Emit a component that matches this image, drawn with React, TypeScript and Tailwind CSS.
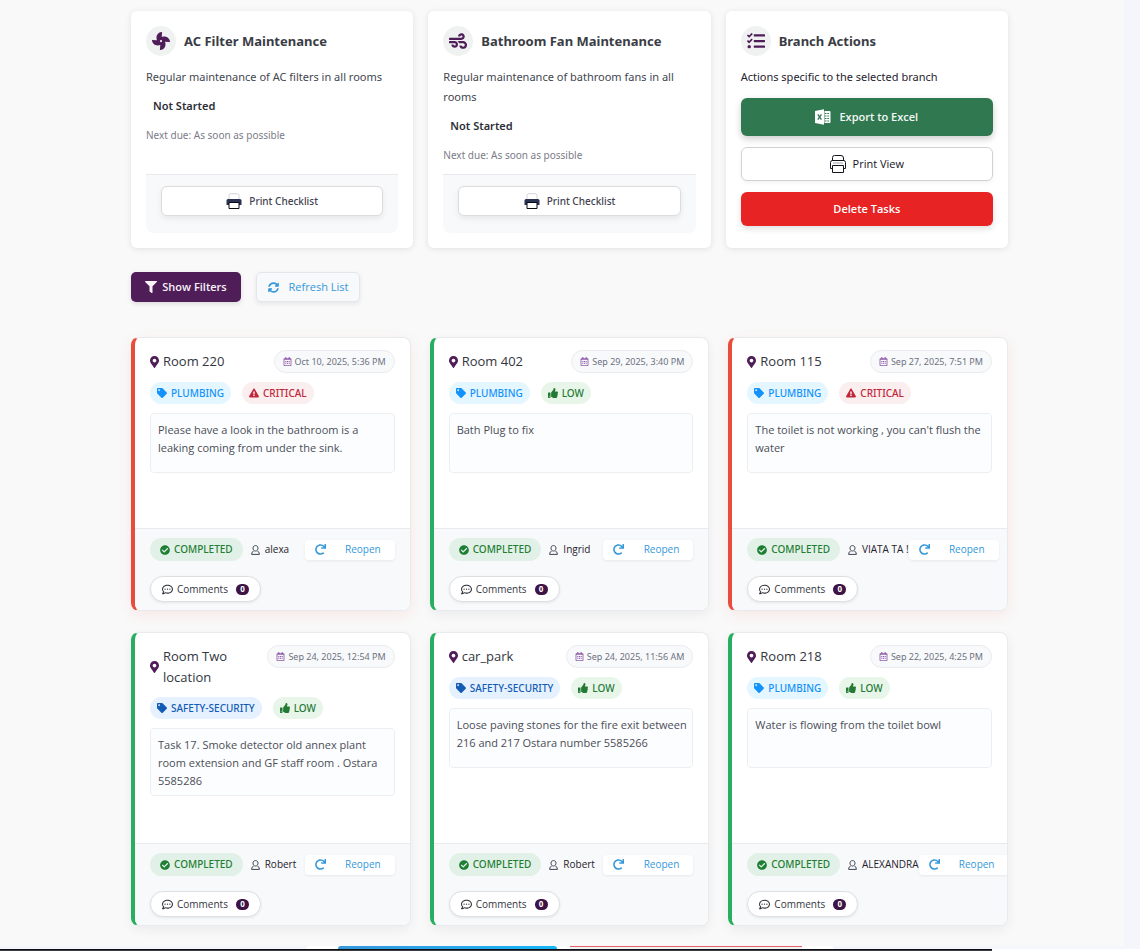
import type { ReactNode } from 'react';
import {
  FaCheckCircle,
  FaExclamationTriangle,
  FaFan,
  FaFilter,
  FaMapMarkerAlt,
  FaRedo,
  FaRegCalendarAlt,
  FaRegCommentDots,
  FaSyncAlt,
  FaTag,
  FaTasks,
  FaThumbsUp,
  FaWind,
} from 'react-icons/fa';

type Category = 'PLUMBING' | 'SAFETY-SECURITY';
type Priority = 'CRITICAL' | 'LOW';

interface Task {
  id: number;
  location: string;
  date: string;
  category: Category;
  priority: Priority;
  description: string;
  user: string;
}

const tasks: Task[] = [
  { id: 1, location: 'Room 220', date: 'Oct 10, 2025, 5:36 PM', category: 'PLUMBING', priority: 'CRITICAL', description: 'Please have a look in the bathroom is a leaking coming from under the sink.', user: 'alexa' },
  { id: 2, location: 'Room 402', date: 'Sep 29, 2025, 3:40 PM', category: 'PLUMBING', priority: 'LOW', description: 'Bath Plug to fix', user: 'Ingrid' },
  { id: 3, location: 'Room 115', date: 'Sep 27, 2025, 7:51 PM', category: 'PLUMBING', priority: 'CRITICAL', description: "The toilet is not working , you can't flush the water", user: 'VIATA TA !' },
  { id: 4, location: 'Room Two location', date: 'Sep 24, 2025, 12:54 PM', category: 'SAFETY-SECURITY', priority: 'LOW', description: 'Task 17. Smoke detector old annex plant room extension and GF staff room . Ostara 5585286', user: 'Robert' },
  { id: 5, location: 'car_park', date: 'Sep 24, 2025, 11:56 AM', category: 'SAFETY-SECURITY', priority: 'LOW', description: 'Loose paving stones for the fire exit between 216 and 217 Ostara number 5585266', user: 'Robert' },
  { id: 6, location: 'Room 218', date: 'Sep 22, 2025, 4:25 PM', category: 'PLUMBING', priority: 'LOW', description: 'Water is flowing from the toilet bowl', user: 'ALEXANDRA' },
];

function PrinterSolid() {
  return (
    <svg width="16" height="16" viewBox="0 0 16 16" aria-hidden="true">
      <path d="M3 6V2.500Q3 .7 4.800.7h6.400Q13 .7 13 2.500V6" fill="#fff" stroke="#d4d4d8" />
      <path d="M2 6h12q1.500 0 1.500 1.500V12H.5V7.500Q.5 6 2 6z" fill="#2b3353" />
      <path d="M3 9.500h10v6H3z" fill="#fff" stroke="#0b0b12" />
    </svg>
  );
}

function PrinterOutline() {
  return (
    <svg width="16" height="18" viewBox="0 0 16 18" fill="none" stroke="#14141f" aria-hidden="true">
      <path d="M2.500 6V2.500Q2.500.5 4.500.5h6.500q2.500 0 2.500 2.500V6" />
      <path d="M2.500 13.500H.5v-6Q.5 5.500 2.500 5.500h11q2 0 2 2v6h-2" />
      <path d="M2.500 10.500h11v7h-11z" />
      <path d="M3 8h10" stroke="#9ca3af" />
    </svg>
  );
}

function ExcelIcon() {
  return (
    <svg width="16" height="16" viewBox="0 0 16 16" aria-hidden="true">
      <path d="M0 2 9 .3v15.400L0 14z" fill="#fff" />
      <path d="M9.500 2h5q1 0 1 1v10q0 1-1 1h-5z" fill="#fff" />
      <path d="M10 4.500h1.500m.8 0H14M10 7h1.500m.8 0H14M10 9.500h1.500m.8 0H14M10 12h1.500m.8 0H14" stroke="#30784f" strokeWidth="1" />
      <path d="m2.800 5.300 3.600 5.400m0-5.400-3.600 5.400" stroke="#30784f" strokeWidth="1.300" />
    </svg>
  );
}

function UserIcon() {
  return (
    <svg width="9" height="10" viewBox="0 0 9 10" fill="none" stroke="#3f4450" strokeWidth="1" aria-hidden="true">
      <path d="M4.500.6C6.200.6 7 1.700 7 3.100 7 4.700 6 6 4.500 6S2 4.700 2 3.100C2 1.700 2.800.6 4.500.6z" />
      <path d="M2.700 6Q.6 6.600.6 9.400h7.800Q8.400 6.600 6.300 6" />
    </svg>
  );
}

function PanelCard({ icon, title, children }: { icon: ReactNode; title: string; children: ReactNode }) {
  return (
    <section className="flex flex-col rounded-md bg-white p-[15px] font-['Noto_Sans','Open_Sans',sans-serif] shadow-[0_1px_6px_rgba(0,0,0,0.1)]">
      <div className="mb-[11px] flex items-center gap-2">
        <span className="flex size-[30px] shrink-0 items-center justify-center rounded-full bg-[#f0f2f2] text-[#4f1d57]">{icon}</span>
        <h2 className="text-[13px] leading-5 font-bold text-[#3a3d45]">{title}</h2>
      </div>
      {children}
    </section>
  );
}

function Maintenance({ icon, title, text }: { icon: ReactNode; title: string; text: string }) {
  return (
    <PanelCard icon={icon} title={title}>
      <p className="text-[11px] leading-5 text-[#42464f]">{text}</p>
      <p className="mt-[9px] px-[7px] text-[11px] leading-5 font-semibold text-[#2b2e36]">Not Started</p>
      <p className="mt-[9px] mb-1 text-[10px] leading-5 text-[#7b7b88]">Next due: As soon as possible</p>
      <div className="mt-auto rounded-b-lg border-t border-[#e6e8eb] bg-[#f8f9fb] px-[15px] pt-[11px] pb-[17px]">
        <button type="button" className="flex h-[30px] w-full items-center justify-center gap-[7px] rounded-md border border-[#dcdcdc] bg-white text-[10px] font-medium text-[#42434f] shadow-[0_3px_6px_rgba(0,0,0,0.07)]">
          <PrinterSolid />
          Print Checklist
        </button>
      </div>
    </PanelCard>
  );
}

const categoryStyle: Record<Category, string> = {
  PLUMBING: 'bg-[#e4f6ff] text-[#1492fb]',
  'SAFETY-SECURITY': 'bg-[#e5f1ff] text-[#125cb5]',
};

function TaskCard({ task }: { task: Task }) {
  const critical = task.priority === 'CRITICAL';
  return (
    <article
      className={
        critical
          ? 'flex flex-col overflow-hidden rounded-lg border border-l-4 border-[#e8eaed] border-l-[#e74c3c] bg-white shadow-[0_4px_14px_rgba(231,76,60,0.1)]'
          : 'flex flex-col overflow-hidden rounded-lg border border-l-4 border-[#e8eaed] border-l-[#27ae60] bg-white shadow-[0_4px_12px_rgba(0,0,0,0.06)]'
      }
    >
      <div className="flex-1 px-[15px] pt-3">
        <div className="flex items-start justify-between gap-2">
          <h3 className="flex items-center gap-1 pt-px text-[13px] leading-[21px] font-medium text-[#33363e]">
            <FaMapMarkerAlt className="h-3 w-[9px] shrink-0 text-[#4f1d57]" />
            {task.location}
          </h3>
          <time className="flex h-[23px] shrink-0 items-center gap-[3px] rounded-full border border-[#e9ebee] bg-[#f8f9fb] px-2 font-['Noto_Sans','Open_Sans',sans-serif] text-[9px] text-[#6c7280]">
            <FaRegCalendarAlt className="size-[9px] text-[#8e5ba8]" />
            {task.date}
          </time>
        </div>
        <div className="mt-[9px] flex gap-[11px] font-['Noto_Sans','Open_Sans',sans-serif] text-[10px] font-medium">
          <span className={`flex h-[22px] items-center gap-1 rounded-full px-[7px] ${categoryStyle[task.category]}`}>
            <FaTag className="size-[10px]" />
            {task.category}
          </span>
          {critical ? (
            <span className="flex h-[22px] items-center gap-1 rounded-full bg-[#faeeee] px-[7px] text-[#c0263a]">
              <FaExclamationTriangle className="size-[10px]" />
              CRITICAL
            </span>
          ) : (
            <span className="flex h-[22px] items-center gap-1 rounded-full bg-[#e8f5e9] px-[7px] text-[#237a35]">
              <FaThumbsUp className="size-[10px]" />
              LOW
            </span>
          )}
        </div>
        <div className="mt-[9px] min-h-[115px]">
          <p className="min-h-[60px] rounded border border-[#eceff2] bg-[#fcfdfe] pt-[7px] pr-1 pb-[5px] pl-[7px] text-[11px] leading-[18px] text-[#4a4e57]">{task.description}</p>
        </div>
      </div>
      <footer className="border-t border-[#e8eaed] bg-[#f8f9fb] px-[15px] pt-[9px] pb-2 text-[10px]">
        <div className="flex h-[23px] items-center">
          <span className="mr-2 flex h-[23px] shrink-0 items-center gap-1 rounded-full bg-[#e2f1e7] px-[10px] font-['Noto_Sans','Open_Sans',sans-serif] font-medium text-[#1e7e34]">
            <FaCheckCircle className="size-[10px]" />
            COMPLETED
          </span>
          <span className="flex shrink-0 items-center gap-[5px] whitespace-nowrap text-[#1f222a]">
            <UserIcon />
            {task.user}
          </span>
          <button type="button" className="ml-auto flex h-5 w-[90px] shrink-0 items-center justify-between rounded-sm bg-white pr-[14px] pl-[10px] font-medium text-[#3498db] shadow-[0_1px_3px_rgba(0,0,0,0.07)]">
            <FaRedo className="size-[11px]" />
            Reopen
          </button>
        </div>
        <button type="button" className="mt-[15px] flex h-[26px] items-center rounded-full border border-[#dedfe1] bg-white px-[11px] font-medium text-[#33363e] shadow-[0_1px_3px_rgba(0,0,0,0.08)]">
          <FaRegCommentDots className="mr-1 size-[11px]" />
          Comments
          <span className="ml-2 flex h-[11px] w-[13px] items-center justify-center rounded-full bg-[#3d1445] text-[8px] font-bold text-white">0</span>
        </button>
      </footer>
    </article>
  );
}

export default function App() {
  return (
    <div className="min-h-screen bg-white font-['Open_Sans','Noto_Sans',sans-serif]">
      <div className="bg-[#f4f6fb] pr-4">
        <main className="bg-[#f9f9f9] pt-[11px] pb-5 pl-[15px]">
          <div className="mx-auto max-w-[877px]">
            <div className="grid grid-cols-3 gap-[15px]">
              <Maintenance icon={<FaFan className="size-[18px]" />} title="AC Filter Maintenance" text="Regular maintenance of AC filters in all rooms" />
              <Maintenance icon={<FaWind className="size-[18px]" />} title="Bathroom Fan Maintenance" text="Regular maintenance of bathroom fans in all rooms" />
              <PanelCard icon={<FaTasks className="size-[18px]" />} title="Branch Actions">
                <p className="text-[11px] leading-5 text-[#1f232e]">Actions specific to the selected branch</p>
                <button type="button" className="mt-[11px] flex h-[38px] items-center justify-center gap-2 rounded-md bg-[#30784f] font-['Open_Sans','Noto_Sans',sans-serif] text-[11px] font-semibold text-[#f4f8f5] shadow-[0_3px_7px_rgba(0,0,0,0.2)]">
                  <ExcelIcon />
                  Export to Excel
                </button>
                <button type="button" className="mt-[11px] flex h-[34px] items-center justify-center gap-[7px] rounded-md border border-[#d2d2d4] bg-white font-['Open_Sans','Noto_Sans',sans-serif] text-[11px] font-medium text-[#14141f] shadow-[0_2px_4px_rgba(0,0,0,0.05)]">
                  <PrinterOutline />
                  Print View
                </button>
                <button type="button" className="mt-[11px] mb-[7px] flex h-[34px] items-center justify-center rounded-md bg-[#e72323] font-['Open_Sans','Noto_Sans',sans-serif] text-[11px] font-semibold text-white shadow-[0_3px_6px_rgba(0,0,0,0.12)]">
                  Delete Tasks
                </button>
              </PanelCard>
            </div>

            <div className="mt-6 flex gap-[15px]">
              <button type="button" className="flex h-[30px] w-[110px] items-center justify-center gap-[5px] rounded-[5px] bg-[#4f1d57] text-[11px] font-semibold text-[#f8f4f9] shadow-[0_2px_5px_rgba(0,0,0,0.12)]">
                <FaFilter className="size-3" />
                Show Filters
              </button>
              <button type="button" className="flex h-[30px] w-[104px] items-center justify-center gap-[10px] rounded-[5px] border border-[#e4e8ec] bg-[#f8f9fb] text-[11px] font-medium text-[#3498db] shadow-[0_2px_5px_rgba(0,0,0,0.08)]">
                <FaSyncAlt className="size-[11px]" />
                Refresh List
              </button>
            </div>

            <div className="mt-[35px] grid grid-cols-3 gap-x-[19px] gap-y-[21px]">
              {tasks.map((task) => (
                <TaskCard key={task.id} task={task} />
              ))}
            </div>
          </div>
        </main>
        <div className="flex h-[3px] justify-center pl-4">
          <div className="flex w-[526px] gap-[13px] overflow-hidden bg-white px-[31px]">
            <div className="w-[219px] rounded-t-sm bg-linear-to-r from-[#3498db] to-[#14b5f7]" />
            <div className="flex-1 border-t border-[#e85d6c] bg-[#eef5f1]" />
          </div>
        </div>
      </div>
      <div className="h-[3px] w-[87%] border-t border-[#0e0f16] bg-[#3a3c42]" />
    </div>
  );
}
